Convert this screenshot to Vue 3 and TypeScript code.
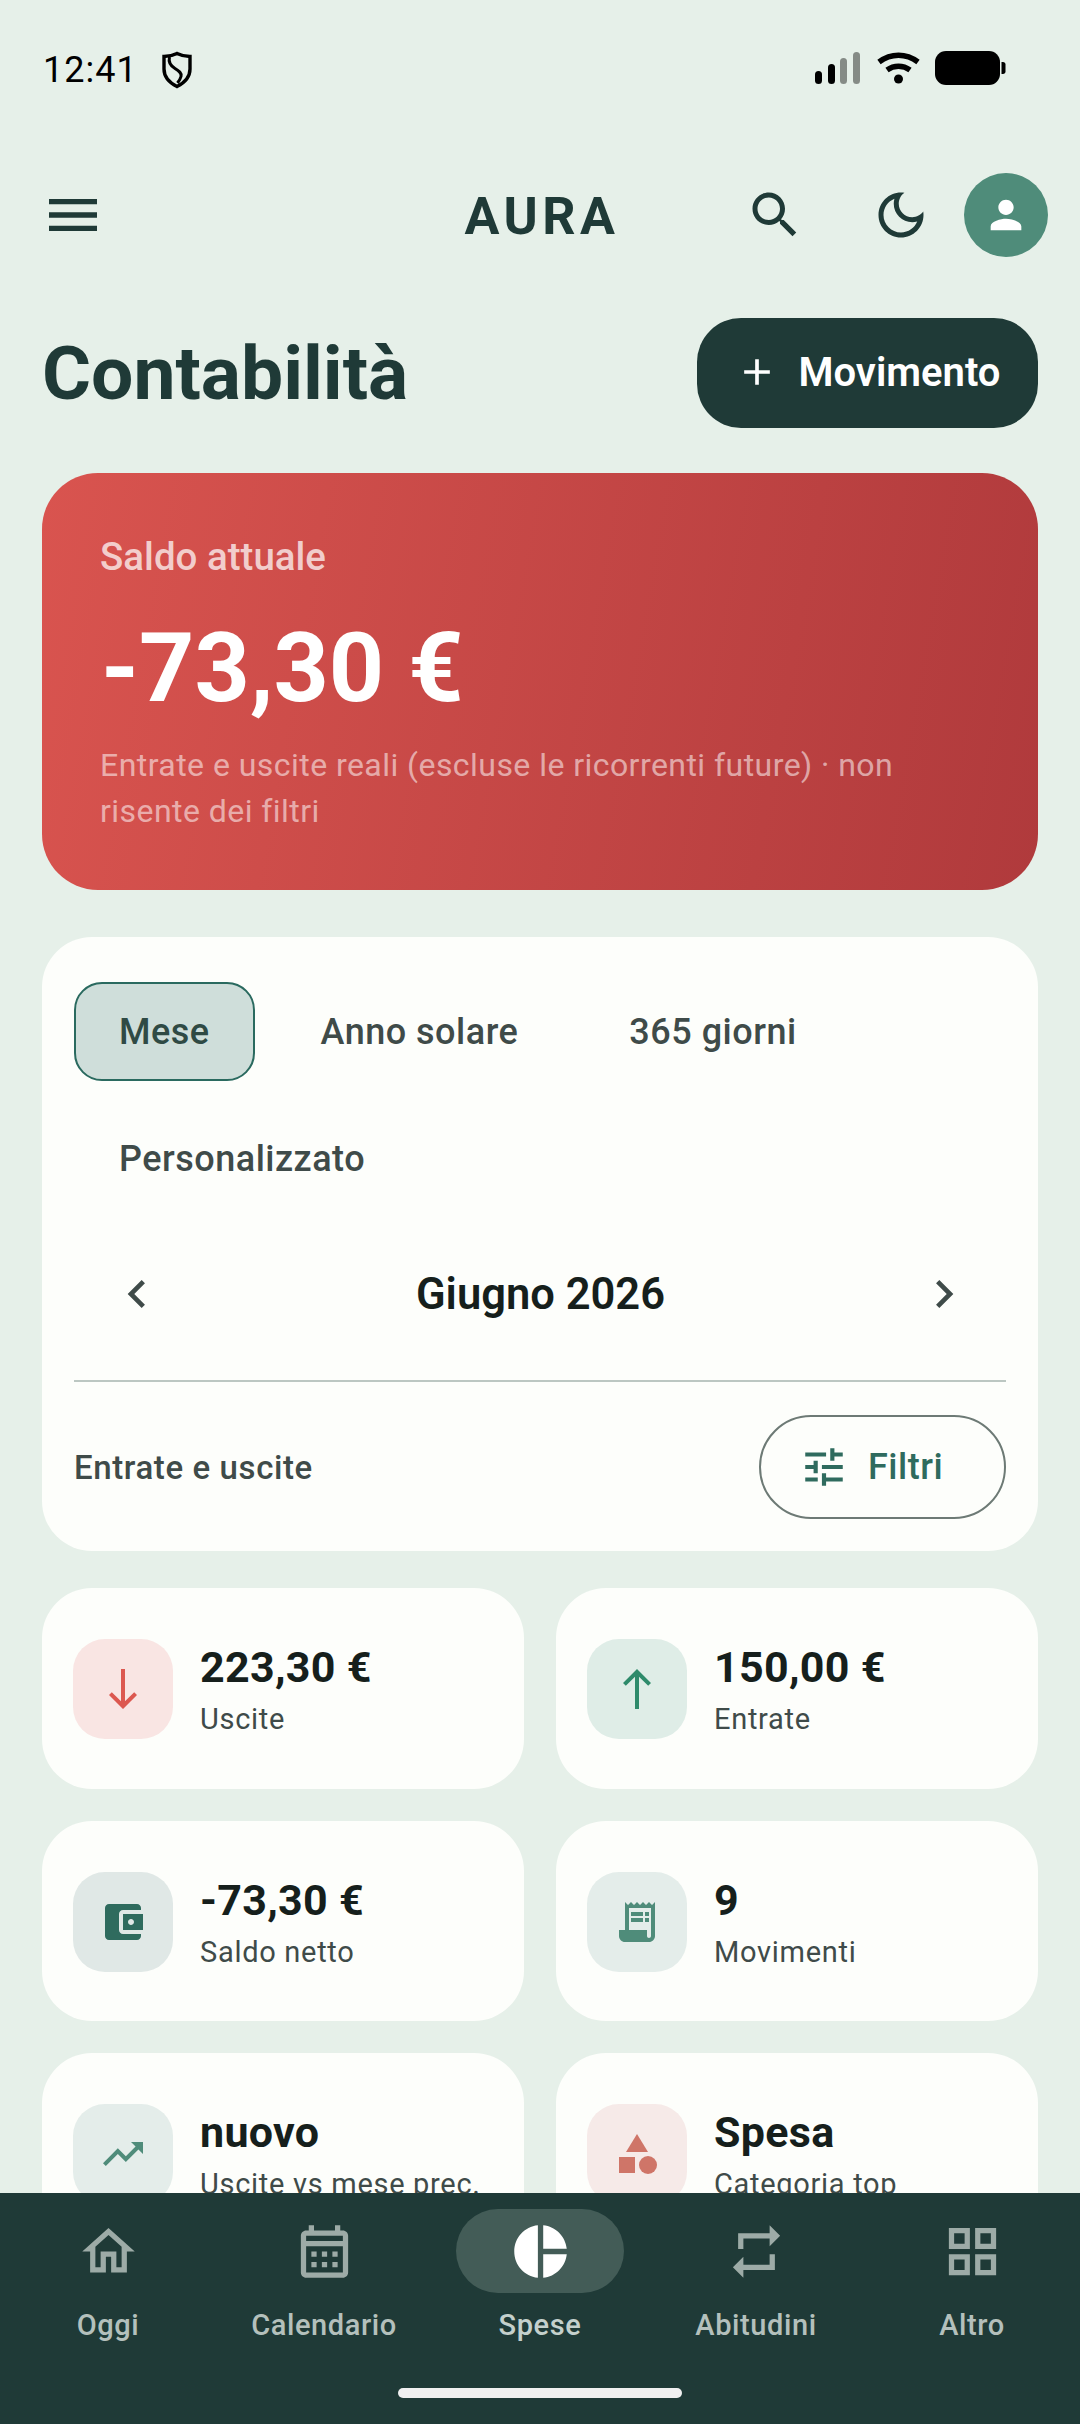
<script setup lang="ts">
interface Stat {
  value: string;
  label: string;
  tint: string;
  color: string;
  paths: string[];
}

const stats: Stat[] = [
  { value: '223,30 €', label: 'Uscite', tint: '#f9e5e3', color: '#dc5850', paths: ['M19 15l-1.41-1.41L13 18.17V2h-2v16.17l-4.59-4.58L5 15l7 7 7-7z'] },
  { value: '150,00 €', label: 'Entrate', tint: '#dfede7', color: '#2e8b6b', paths: ['M5 9l1.41 1.41L11 5.83V22h2V5.83l4.59 4.59L19 9l-7-7-7 7z'] },
  { value: '-73,30 €', label: 'Saldo netto', tint: '#e0e8e6', color: '#2f6b5e', paths: ['M21 18v1c0 1.1-.9 2-2 2H5c-1.11 0-2-.9-2-2V5c0-1.1.89-2 2-2h14c1.1 0 2 .9 2 2v1h-9c-1.11 0-2 .9-2 2v8c0 1.1.89 2 2 2h9zm-9-2h10V8H12v8zm4-2.5c-.83 0-1.5-.67-1.5-1.5s.67-1.5 1.5-1.5 1.5.67 1.5 1.5-.67 1.5-1.5 1.5z'] },
  { value: '9', label: 'Movimenti', tint: '#e4edea', color: '#4f8c7a', paths: ['M19.5 3.5L18 2l-1.5 1.5L15 2l-1.5 1.5L12 2l-1.5 1.5L9 2 7.5 3.5 6 2v14H3v3c0 1.66 1.34 3 3 3h12c1.66 0 3-1.34 3-3V2l-1.5 1.5zM19 19c0 .55-.45 1-1 1s-1-.45-1-1v-3H8V5h11v14z', 'M9 7h6v2H9zm7 0h2v2h-2zm-7 3h6v2H9zm7 0h2v2h-2z'] },
  { value: 'nuovo', label: 'Uscite vs mese prec.', tint: '#e4edea', color: '#4f8c7a', paths: ['M16 6l2.29 2.29-4.88 4.88-4-4L2 16.59 3.41 18l6-6 4 4 6.3-6.29L22 12V6z'] },
  { value: 'Spesa', label: 'Categoria top', tint: '#f6eae8', color: '#cf7568', paths: ['M12 2l-5.5 9h11z', 'M13 17.5a4.5 4.5 0 1 0 9 0a4.5 4.5 0 1 0-9 0z', 'M3 13.5h8v8H3z'] },
];

const navItems = [
  { label: 'Oggi', active: false, d: 'M12 5.69l5 4.5V18h-2v-6H9v6H7v-7.81l5-4.5M12 3L2 12h3v8h6v-6h2v6h6v-8h3L12 3z' },
  { label: 'Calendario', active: false, d: 'M19 4h-1V2h-2v2H8V2H6v2H5c-1.1 0-2 .9-2 2v14c0 1.1.9 2 2 2h14c1.1 0 2-.9 2-2V6c0-1.1-.9-2-2-2zm0 16H5V10h14v10zm0-12H5V6h14v2zM9 14H7v-2h2v2zm4 0h-2v-2h2v2zm4 0h-2v-2h2v2zm-8 4H7v-2h2v2zm4 0h-2v-2h2v2zm4 0h-2v-2h2v2z' },
  { label: 'Spese', active: true, d: 'M11 2v20c-5.07-.5-9-4.79-9-10s3.93-9.5 9-10zm2.03 0v8.99H22c-.47-4.74-4.24-8.52-8.97-8.99zm0 11.01V22c4.74-.47 8.5-4.25 8.97-8.99h-8.97z' },
  { label: 'Abitudini', active: false, d: 'M7 7h10v3l4-4-4-4v3H5v6h2V7zm10 10H7v-3l-4 4 4 4v-3h12v-6h-2v4z' },
  { label: 'Altro', active: false, d: 'M3 3v8h8V3H3zm6 6H5V5h4v4zm-6 4v8h8v-8H3zm6 6H5v-4h4v4zm4-16v8h8V3h-8zm6 6h-4V5h4v4zm-6 4v8h8v-8h-8zm6 6h-4v-4h4v4z' },
];

const chips = ['Mese', 'Anno solare', '365 giorni', 'Personalizzato'];
</script>

<template>
  <div class="app">
    <div class="content">
      <div class="status">
        <span class="clock">12:41</span>
        <svg class="shield" viewBox="0 0 32 38" fill="none" stroke="#000" stroke-width="3.4">
          <path d="M16 2.5C12 4.5 7.500 5.500 3 5.500V18c0 7.500 5 13.500 13 17.500 8-4 13-10 13-17.500V5.500C24.500 5.500 20 4.500 16 2.500z" />
          <path d="M8.500 6C7 12 10 15 14 17.500c4 2.500 7 4.500 6 8-.6 2.500-2 4.500-3.500 6.500" stroke-width="3" />
        </svg>
        <svg class="sys" viewBox="0 0 200 40">
          <rect x="5" y="21" width="7" height="13" rx="3.500" fill="#000" />
          <rect x="18" y="14" width="7" height="20" rx="3.500" fill="#000" />
          <rect x="30" y="8" width="7" height="26" rx="3.500" fill="#858b86" />
          <rect x="43" y="2" width="7" height="32" rx="3.500" fill="#858b86" />
          <g fill="none" stroke="#000" stroke-width="5.500">
            <path d="M69 12c12-9 27-9 39 0" />
            <path d="M77 20c7-5 16-5 23 0" />
          </g>
          <circle cx="88.500" cy="29" r="4.500" fill="#000" />
          <rect x="125" y="1" width="65" height="34" rx="11" fill="#000" />
          <path d="M191.500 12h1.500c1.500 0 2.500 1 2.500 2.500v7c0 1.500-1 2.500-2.500 2.500h-1.500z" fill="#000" />
        </svg>
      </div>

      <header class="topbar">
        <svg class="ico-menu" viewBox="3 6 18 12"><path d="M3 18h18v-2H3v2zm0-5h18v-2H3v2zm0-7v2h18V6H3z" /></svg>
        <div class="brand">AURA</div>
        <svg class="ico-search" viewBox="0 0 24 24"><path d="M15.500 14h-.79l-.28-.27C15.410 12.590 16 11.110 16 9.500 16 5.910 13.090 3 9.500 3S3 5.910 3 9.500 5.910 16 9.500 16c1.610 0 3.090-.59 4.230-1.570l.27.28v.79l5 4.990L20.490 19l-4.990-5zm-6 0C7.010 14 5 11.990 5 9.500S7.010 5 9.500 5 14 7.010 14 9.500 11.990 14 9.500 14z" /></svg>
        <svg class="ico-moon" viewBox="0 0 24 24"><path d="M9.370 5.510C9.190 6.150 9.100 6.820 9.100 7.500c0 4.080 3.320 7.400 7.400 7.400.68 0 1.350-.09 1.990-.27C17.450 17.190 14.930 19 12 19c-3.860 0-7-3.140-7-7 0-2.930 1.810-5.450 4.370-6.490zM12 3c-4.970 0-9 4.030-9 9s4.030 9 9 9 9-4.030 9-9c0-.46-.04-.92-.1-1.360-.98 1.370-2.580 2.260-4.400 2.260-2.980 0-5.400-2.420-5.400-5.400 0-1.810.89-3.420 2.260-4.400C12.920 3.040 12.460 3 12 3z" /></svg>
        <div class="avatar">
          <svg viewBox="0 0 24 24"><path d="M12 12c2.210 0 4-1.790 4-4s-1.790-4-4-4-4 1.790-4 4 1.790 4 4 4zm0 2c-2.670 0-8 1.340-8 4v2h16v-2c0-2.660-5.330-4-8-4z" /></svg>
        </div>
      </header>

      <div class="title-row">
        <h1>Contabilità</h1>
        <button class="add-btn">
          <svg viewBox="0 0 24 24"><path d="M19 13h-6v6h-2v-6H5v-2h6V5h2v6h6v2z" /></svg>
          Movimento
        </button>
      </div>

      <section class="hero">
        <div class="hero-label">Saldo attuale</div>
        <div class="hero-amount">-73,30 €</div>
        <p class="hero-note">Entrate e uscite reali (escluse le ricorrenti future) · non risente dei filtri</p>
      </section>

      <section class="filters">
        <div class="chips">
          <span v-for="(c, i) in chips" :key="c" class="chip" :class="{ on: i === 0 }">{{ c }}</span>
        </div>
        <div class="month">
          <svg viewBox="0 0 24 24"><path d="M15.410 7.410L14 6l-6 6 6 6 1.410-1.410L10.830 12z" /></svg>
          <strong>Giugno 2026</strong>
          <svg viewBox="0 0 24 24"><path d="M10 6L8.590 7.410 13.170 12l-4.580 4.590L10 18l6-6z" /></svg>
        </div>
        <div class="filter-row">
          <span>Entrate e uscite</span>
          <button class="filter-btn">
            <svg viewBox="0 0 24 24"><path d="M3 17v2h6v-2H3zM3 5v2h10V5H3zm10 16v-2h8v-2h-8v-2h-2v6h2zM7 9v2H3v2h4v2h2V9H7zm14 4v-2H11v2h10zm-6-4h2V7h4V5h-4V3h-2v6z" /></svg>
            Filtri
          </button>
        </div>
      </section>

      <section class="stats">
        <div v-for="s in stats" :key="s.label" class="stat">
          <div class="stat-icon" :style="{ background: s.tint }">
            <svg viewBox="0 0 24 24" :fill="s.color"><path v-for="d in s.paths" :key="d" :d="d" /></svg>
          </div>
          <div class="stat-text">
            <div class="stat-value">{{ s.value }}</div>
            <div class="stat-label">{{ s.label }}</div>
          </div>
        </div>
      </section>
    </div>

    <nav class="nav">
      <div class="nav-items">
        <div v-for="n in navItems" :key="n.label" class="nav-item" :class="{ active: n.active }">
          <div class="nav-pill">
            <svg viewBox="0 0 24 24"><path :d="n.d" /></svg>
          </div>
          <span>{{ n.label }}</span>
        </div>
      </div>
      <div class="home-bar"></div>
    </nav>
  </div>
</template>

<style>
html, body { margin: 0; background: #e6f0e9; }
</style>

<style scoped>
.app {
  width: 1080px;
  height: 2424px;
  display: flex;
  flex-direction: column;
  overflow: hidden;
  background: #e6f0e9;
  font-family: Roboto, "Noto Sans", sans-serif;
  color: #1f3a37;
}
.content { flex: 1; min-height: 0; overflow: hidden; }

.status { height: 140px; display: flex; align-items: center; padding: 0 70px 0 43px; box-sizing: border-box; }
.clock { font-size: 36px; color: #000; letter-spacing: 1px; }
.shield { width: 32px; height: 38px; margin-left: 23px; }
.sys { width: 200px; height: 40px; margin-left: auto; }

.topbar { height: 84px; margin-top: 33px; display: flex; align-items: center; padding: 0 32px 0 48px; position: relative; }
.topbar svg { fill: #1f3a37; }
.ico-menu { width: 50px; height: 32px; }
.brand { position: absolute; left: 4px; right: 0; padding-top: 3px; text-align: center; font-size: 52px; font-weight: 700; letter-spacing: 4.5px; }
.ico-search { width: 60px; height: 60px; margin-left: auto; }
.ico-moon { width: 60px; height: 60px; margin-left: 66px; }
.avatar { width: 84px; height: 84px; border-radius: 50%; background: #4f8c7a; margin-left: 33px; display: flex; align-items: center; justify-content: center; }
.topbar .avatar svg { width: 46px; height: 46px; fill: #fff; }

.title-row { display: flex; align-items: center; justify-content: space-between; margin: 61px 42px 0; height: 110px; }
h1 { margin: 0; font-size: 75px; font-weight: 700; }
.add-btn { height: 110px; width: 341px; border: 0; border-radius: 44px; background: #1f3a37; color: #fff; font: 600 40px Roboto, sans-serif; display: flex; align-items: center; justify-content: center; gap: 20px; padding: 0 0 2px; }
.add-btn svg { width: 44px; height: 44px; fill: #fff; }

.hero { margin: 45px 42px 0; height: 417px; box-sizing: border-box; padding: 62px 58px 0; border-radius: 56px; background: linear-gradient(100deg, #d9544f, #b03a3c); color: #fff; }
.hero-label { font-size: 38.500px; font-weight: 500; line-height: 44px; color: rgba(255, 255, 255, 0.72); }
.hero-amount { font-size: 96.500px; font-weight: 700; line-height: 108px; margin-top: 35px; margin-left: 1px; }
.hero-note { margin: 20px 0 0; font-size: 32px; line-height: 46px; color: rgba(255, 255, 255, 0.55); letter-spacing: 0.45px; }

.filters { margin: 47px 42px 0; height: 614px; box-sizing: border-box; padding: 45px 32px 0; border-radius: 50px; background: #fdfefb; }
.chips { display: flex; flex-wrap: wrap; gap: 28px 21px; }
.chip { height: 99px; box-sizing: border-box; padding: 0 43px; border: 2px solid transparent; border-radius: 28px; display: flex; align-items: center; font-size: 36px; font-weight: 500; letter-spacing: 0.5px; color: #3f4b49; }
.chip.on { background: #cfdeda; border-color: #2a6a5f; color: #2f4a44; }

.month { display: flex; align-items: center; justify-content: space-between; height: 100px; margin-top: 36px; padding: 0 34px 0 35px; color: #161f1c; font-size: 43.500px; }
.month svg { width: 56px; height: 56px; fill: #3f4b49; }
.month strong { font-weight: 600; }

.filter-row { border-top: 2px solid #bcc7c2; margin-top: 36px; padding-top: 33px; display: flex; align-items: center; justify-content: space-between; font-size: 33px; font-weight: 500; letter-spacing: 0.6px; color: #3f4b49; }
.filter-btn { width: 247px; height: 104px; border: 2px solid #6d7a75; border-radius: 52px; background: none; color: #2f6b5e; font: 500 36px Roboto, sans-serif; letter-spacing: 0.5px; display: flex; align-items: center; gap: 19px; padding: 0 0 0 38px; }
.filter-btn svg { width: 50px; height: 50px; fill: #2f6b5e; }

.stats { display: grid; grid-template-columns: 1fr 1fr; gap: 32px; margin: 37px 42px 0; }
.stat { height: 200.500px; box-sizing: border-box; padding: 51px 31px 0; border-radius: 50px; background: #fdfefb; display: flex; gap: 27px; }
.stat-icon { width: 100px; height: 100px; flex: none; border-radius: 32px; display: flex; align-items: center; justify-content: center; }
.stat-icon svg { width: 48px; height: 48px; }
.stat-value { font-size: 43px; font-weight: 700; line-height: 50px; color: #161f1c; letter-spacing: 0.3px; margin-top: 3px; }
.stat-label { font-size: 29px; font-weight: 400; line-height: 36px; margin-top: 9px; color: #3f4b49; letter-spacing: 0.7px; }

.nav { flex: none; height: 231px; background: #1f3a37; display: flex; flex-direction: column; }
.nav-items { display: grid; grid-template-columns: repeat(5, 1fr); padding-top: 16px; }
.nav-item { display: flex; flex-direction: column; align-items: center; color: #b4c0bc; font-size: 29px; font-weight: 500; letter-spacing: 0.6px; }
.nav-pill { width: 168px; height: 84px; border-radius: 42px; display: flex; align-items: center; justify-content: center; }
.nav-pill svg { width: 63px; height: 63px; fill: #9dabA7; }
.nav-item span { margin-top: 14px; line-height: 36px; }
.nav-item.active .nav-pill { background: #435c57; }
.nav-item.active svg { fill: #fff; }
.nav-item.active span { color: #c4d0cc; }
.home-bar { width: 284px; height: 10px; border-radius: 5px; background: #f0f0f0; margin: 45px auto 0; }
</style>
